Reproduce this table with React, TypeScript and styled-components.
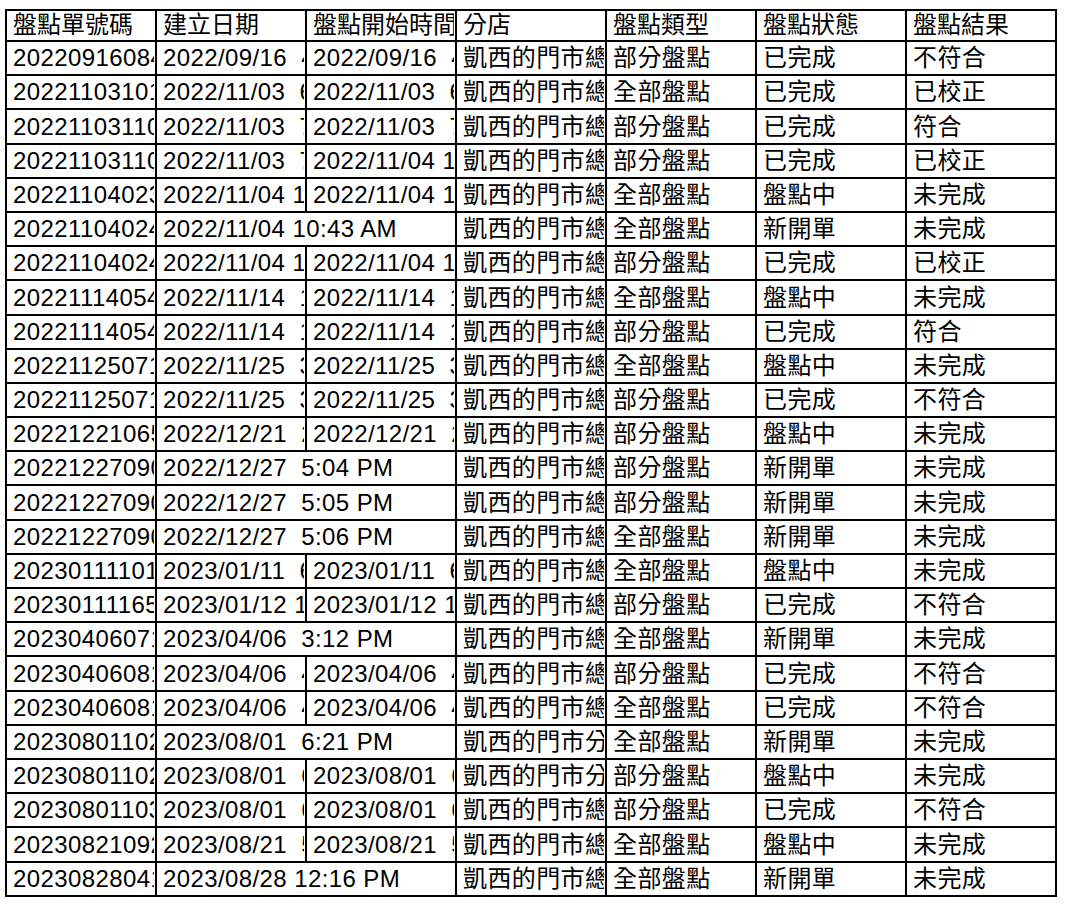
import React from "react";
import styled, { createGlobalStyle } from "styled-components";

const GlobalStyle = createGlobalStyle`
  html, body {
    margin: 0;
    padding: 0;
    background: #ffffff;
  }
  body {
    font-family: "Liberation Sans", "Noto Sans CJK TC", sans-serif;
    color: #000;
  }
`;

const Page = styled.div`
  padding: 9px 0 0 5px;
`;

const Sheet = styled.table`
  border-collapse: collapse;
  table-layout: fixed;
  width: 1052px;
  font-family: "Liberation Sans", "Noto Sans CJK TC", sans-serif;
  font-size: 24px;
  color: #000;
`;

const Col = styled.col`
  width: 150px;
`;

const HeadRow = styled.tr`
  height: 31px;
`;

const Row = styled.tr`
  height: 34.2px;
`;

const Cell = styled.td`
  border: 2px solid #000;
  padding: 0 1px 3px 6px;
  vertical-align: bottom;
  line-height: 26px;
  font-weight: 400;
  text-align: left;
  overflow: hidden;
  letter-spacing: 0.4px;
`;

const HeadCell = styled(Cell).attrs({ as: "th" })`
  padding-bottom: 2px;
  letter-spacing: 0;
`;

const Clip = styled.span`
  display: block;
  overflow: hidden;
  white-space: pre;
  text-overflow: clip;
`;

type Rec = {
  id: string;
  created: string;
  start?: string;
  store: string;
  kind: string;
  status: string;
  result: string;
};

const MAIN = "凱西的門市總店";
const BRANCH = "凱西的門市分店";

const rows: Rec[] = [
  { id: "2022091608401", created: "2022/09/16  4:05 PM", start: "2022/09/16  4:06 PM", store: MAIN, kind: "部分盤點", status: "已完成", result: "不符合" },
  { id: "2022110310101", created: "2022/11/03  6:01 PM", start: "2022/11/03  6:02 PM", store: MAIN, kind: "全部盤點", status: "已完成", result: "已校正" },
  { id: "2022110311001", created: "2022/11/03  7:10 PM", start: "2022/11/03  7:11 PM", store: MAIN, kind: "部分盤點", status: "已完成", result: "符合" },
  { id: "2022110311002", created: "2022/11/03  7:20 PM", start: "2022/11/04 10:01 AM", store: MAIN, kind: "部分盤點", status: "已完成", result: "已校正" },
  { id: "2022110402301", created: "2022/11/04 10:23 AM", start: "2022/11/04 10:24 AM", store: MAIN, kind: "全部盤點", status: "盤點中", result: "未完成" },
  { id: "2022110402401", created: "2022/11/04 10:43 AM", store: MAIN, kind: "全部盤點", status: "新開單", result: "未完成" },
  { id: "2022110402402", created: "2022/11/04 10:44 AM", start: "2022/11/04 10:45 AM", store: MAIN, kind: "部分盤點", status: "已完成", result: "已校正" },
  { id: "2022111405401", created: "2022/11/14  1:54 PM", start: "2022/11/14  1:55 PM", store: MAIN, kind: "全部盤點", status: "盤點中", result: "未完成" },
  { id: "2022111405402", created: "2022/11/14  1:56 PM", start: "2022/11/14  1:57 PM", store: MAIN, kind: "部分盤點", status: "已完成", result: "符合" },
  { id: "2022112507101", created: "2022/11/25  3:10 PM", start: "2022/11/25  3:11 PM", store: MAIN, kind: "全部盤點", status: "盤點中", result: "未完成" },
  { id: "2022112507102", created: "2022/11/25  3:12 PM", start: "2022/11/25  3:13 PM", store: MAIN, kind: "部分盤點", status: "已完成", result: "不符合" },
  { id: "2022122106501", created: "2022/12/21  2:50 PM", start: "2022/12/21  2:51 PM", store: MAIN, kind: "部分盤點", status: "盤點中", result: "未完成" },
  { id: "2022122709001", created: "2022/12/27  5:04 PM", store: MAIN, kind: "部分盤點", status: "新開單", result: "未完成" },
  { id: "2022122709002", created: "2022/12/27  5:05 PM", store: MAIN, kind: "部分盤點", status: "新開單", result: "未完成" },
  { id: "2022122709003", created: "2022/12/27  5:06 PM", store: MAIN, kind: "全部盤點", status: "新開單", result: "未完成" },
  { id: "2023011110101", created: "2023/01/11  6:10 PM", start: "2023/01/11  6:11 PM", store: MAIN, kind: "全部盤點", status: "盤點中", result: "未完成" },
  { id: "2023011116501", created: "2023/01/12 11:05 AM", start: "2023/01/12 11:06 AM", store: MAIN, kind: "部分盤點", status: "已完成", result: "不符合" },
  { id: "2023040607101", created: "2023/04/06  3:12 PM", store: MAIN, kind: "全部盤點", status: "新開單", result: "未完成" },
  { id: "2023040608101", created: "2023/04/06  4:08 PM", start: "2023/04/06  4:09 PM", store: MAIN, kind: "部分盤點", status: "已完成", result: "不符合" },
  { id: "2023040608102", created: "2023/04/06  4:10 PM", start: "2023/04/06  4:11 PM", store: MAIN, kind: "全部盤點", status: "已完成", result: "不符合" },
  { id: "2023080110201", created: "2023/08/01  6:21 PM", store: BRANCH, kind: "全部盤點", status: "新開單", result: "未完成" },
  { id: "2023080110202", created: "2023/08/01  6:22 PM", start: "2023/08/01  6:23 PM", store: BRANCH, kind: "部分盤點", status: "盤點中", result: "未完成" },
  { id: "2023080110301", created: "2023/08/01  6:30 PM", start: "2023/08/01  6:31 PM", store: MAIN, kind: "部分盤點", status: "已完成", result: "不符合" },
  { id: "2023082109201", created: "2023/08/21  5:20 PM", start: "2023/08/21  5:21 PM", store: MAIN, kind: "全部盤點", status: "盤點中", result: "未完成" },
  { id: "2023082804101", created: "2023/08/28 12:16 PM", store: MAIN, kind: "全部盤點", status: "新開單", result: "未完成" },
];

const headers = ["盤點單號碼", "建立日期", "盤點開始時間", "分店", "盤點類型", "盤點狀態", "盤點結果"];

export default function App() {
  return (
    <Page>
      <GlobalStyle />
      <Sheet>
        <colgroup>
          {headers.map((h) => (
            <Col key={h} />
          ))}
        </colgroup>
        <thead>
          <HeadRow>
            {headers.map((h) => (
              <HeadCell key={h}>
                <Clip>{h}</Clip>
              </HeadCell>
            ))}
          </HeadRow>
        </thead>
        <tbody>
          {rows.map((r, i) => (
            <Row key={i}>
              <Cell>
                <Clip>{r.id}</Clip>
              </Cell>
              {r.start ? (
                <>
                  <Cell>
                    <Clip>{r.created}</Clip>
                  </Cell>
                  <Cell>
                    <Clip>{r.start}</Clip>
                  </Cell>
                </>
              ) : (
                <Cell colSpan={2}>
                  <Clip>{r.created}</Clip>
                </Cell>
              )}
              <Cell>
                <Clip>{r.store}</Clip>
              </Cell>
              <Cell>
                <Clip>{r.kind}</Clip>
              </Cell>
              <Cell>
                <Clip>{r.status}</Clip>
              </Cell>
              <Cell>
                <Clip>{r.result}</Clip>
              </Cell>
            </Row>
          ))}
        </tbody>
      </Sheet>
    </Page>
  );
}
